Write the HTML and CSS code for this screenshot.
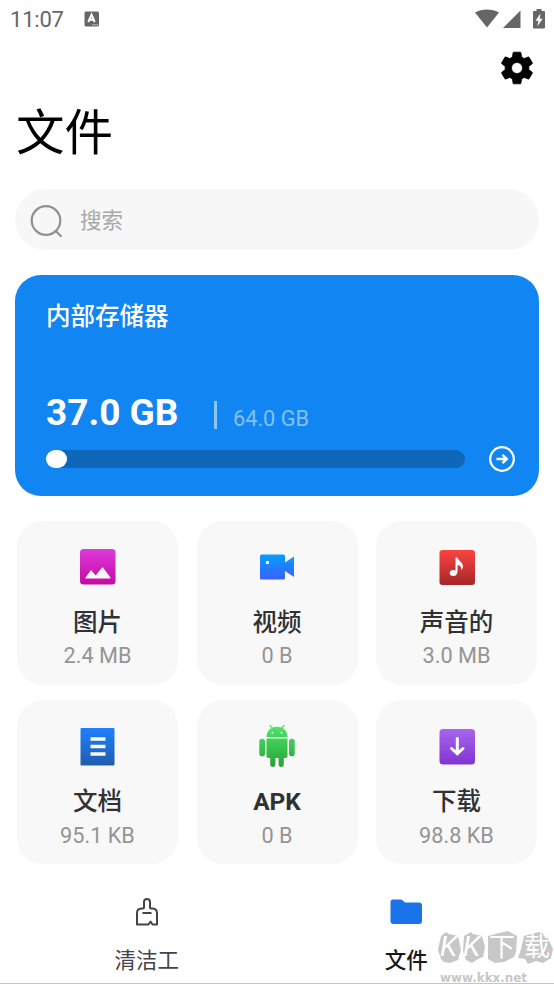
FILE: index.html
```html
<!DOCTYPE html>
<html lang="zh-CN">
<head>
<meta charset="utf-8">
<title>文件</title>
<link rel="stylesheet" href="styles.css">
</head>
<body>
<div class="screen">
  <header class="status">
    <span class="clock">11:07</span>
    <svg class="ime" width="16" height="16" viewBox="0 0 16 16"><rect x=".5" y=".5" width="14.5" height="15" rx="1.5" fill="#666"/><path d="M4.300 11 7.500 3.700 10.700 11M5.700 8.700h3.600" fill="none" stroke="#fff" stroke-width="2"/><path d="M8 13.800h6" stroke="#ddd" stroke-width="1" stroke-dasharray="1.500 .7"/></svg>
    <span class="signals">
      <svg width="24" height="20" viewBox="0 0 24 20"><path d="M0 3.500C6.500-.6 17.500-.6 24 3.500L12 18.500Z" fill="#666"/></svg>
      <svg width="18" height="20" viewBox="0 0 18 20"><path d="M0 19 17.500 1.500V19Z" fill="#666"/></svg>
      <svg class="battery" width="12" height="20" viewBox="0 0 12 20"><path d="M3.500 0h5v2H11q1 0 1 1v15.500q0 1-1 1H1q-1 0-1-1V3q0-1 1-1h2.500Z" fill="#666"/><path d="M7.500 4.500 2.500 11.700H5.500L4.300 17.300 9.700 9.800H6.700Z" fill="#fff"/></svg>
    </span>
  </header>
  <div class="toolbar">
    <svg width="38" height="38" viewBox="0 0 24 24"><path d="M19.430 12.980c.040-.320.070-.640.070-.980s-.030-.660-.070-.980l2.110-1.650c.190-.150.240-.420.120-.640l-2-3.460c-.120-.220-.390-.300-.610-.220l-2.490 1c-.520-.400-1.080-.730-1.690-.980l-.380-2.650A.488.488 0 0 0 14 2h-4c-.250 0-.460.180-.490.420l-.380 2.650c-.610.250-1.170.590-1.690.980l-2.490-1c-.230-.090-.490 0-.610.220l-2 3.460c-.130.220-.070.490.120.640l2.110 1.650c-.040.320-.070.650-.070.980s.030.660.070.980l-2.110 1.650c-.190.150-.240.420-.120.640l2 3.460c.120.220.390.300.610.220l2.490-1c.520.400 1.080.730 1.690.980l.380 2.650c.030.240.240.420.490.420h4c.250 0 .460-.180.490-.420l.380-2.650c.610-.250 1.170-.590 1.690-.980l2.490 1c.230.090.490 0 .610-.220l2-3.460c.120-.220.070-.490-.120-.640l-2.110-1.650zM12 15.500c-1.930 0-3.500-1.570-3.500-3.500s1.570-3.500 3.500-3.500 3.500 1.570 3.500 3.500-1.570 3.500-3.500 3.500z" stroke="#000" stroke-width=".5"/></svg>
  </div>
  <h1>文件</h1>
  <div class="search">
    <svg width="34" height="34" viewBox="0 0 34 34" fill="none" stroke="#919191" stroke-width="2.200"><circle cx="16" cy="15.500" r="14.300"/><path d="m25.500 25.700 6 6"/></svg>
    <span>搜索</span>
  </div>
  <section class="storage">
    <h2>内部存储器</h2>
    <div class="amount"><b>37.0 GB</b><i></i><span>64.0 GB</span></div>
    <div class="usage">
      <div class="track"><div class="fill"></div></div>
      <svg width="26" height="26" viewBox="0 0 26 26" fill="none" stroke="#fff" stroke-width="2.200"><circle cx="13" cy="13" r="11.800"/><path d="M7.500 13H18M13.500 8.800 17.700 13l-4.200 4.200" stroke-width="2.500"/></svg>
    </div>
  </section>
  <main class="grid">
    <div class="tile">
      <svg class="icon" width="44" height="48" viewBox="0 0 44 48"><defs><linearGradient id="g1" x2="0" y2="1"><stop stop-color="#dc3bdc"/><stop offset="1" stop-color="#c40aa0"/></linearGradient></defs><rect x="4" y="6" width="35.500" height="35.500" rx="3.500" fill="url(#g1)"/><path d="M9.500 35.500v-1L15 27l4.700 5.500L26.500 24l8 10.500v1Z" fill="#f8f8f8"/></svg>
      <h3>图片</h3><p>2.4 MB</p>
    </div>
    <div class="tile">
      <svg class="icon" width="44" height="48" viewBox="0 0 44 48"><defs><linearGradient id="g2" x1="0" y1="11" x2="0" y2="36" gradientUnits="userSpaceOnUse"><stop stop-color="#03a0ff"/><stop offset="1" stop-color="#3d60ff"/></linearGradient></defs><path d="M6.500 11.500h22q1.500 0 1.500 1.500v6.500l9-6v20.500l-9-6V35q0 1.500-1.500 1.500H6.500q-1.500 0-1.500-1.500V13q0-1.500 1.500-1.500Z" fill="url(#g2)"/><rect x="11" y="18" width="3" height="3" fill="#fff"/></svg>
      <h3>视频</h3><p>0 B</p>
    </div>
    <div class="tile">
      <svg class="icon" width="44" height="48" viewBox="0 0 44 48"><defs><linearGradient id="g3" x2="0" y2="1"><stop stop-color="#fb4441"/><stop offset="1" stop-color="#a52727"/></linearGradient></defs><rect x="4.500" y="7" width="35.500" height="35" rx="3" fill="url(#g3)"/><ellipse cx="18.300" cy="30" rx="3.600" ry="2.900" fill="#fff"/><path d="M20.500 30V14.500h2C23.500 18.500 28 18.500 28 24L26.500 27.500C26.500 24 25.500 22.500 22.500 22V30Z" fill="#fff"/></svg>
      <h3>声音的</h3><p>3.0 MB</p>
    </div>
    <div class="tile">
      <svg class="icon" width="44" height="48" viewBox="0 0 44 48"><defs><linearGradient id="g4" x2="0" y2="1"><stop stop-color="#1e80fc"/><stop offset="1" stop-color="#205dac"/></linearGradient></defs><rect x="4.500" y="6" width="34" height="37.500" rx="1" fill="url(#g4)"/><path d="M14.500 17h15M14.500 24.500h15M14.500 32h15" stroke="#f8f8f8" stroke-width="3.500"/></svg>
      <h3>文档</h3><p>95.1 KB</p>
    </div>
    <div class="tile">
      <svg class="icon" width="44" height="48" viewBox="0 0 44 48"><defs><linearGradient id="g5" x1="0" y1="3" x2="0" y2="45" gradientUnits="userSpaceOnUse"><stop stop-color="#4ce967"/><stop offset="1" stop-color="#29a23a"/></linearGradient></defs><path d="M11.500 15C11.500 10.500 13.500 8 16.500 6L14 3.500l1-.8 3 2.700q4-1.500 8 0l3-2.700 1 .8L27.500 6c3 2 5 4.500 5 9ZM11.500 16.500h21V34q0 2-2 2h-1.700v6q0 3-2.600 3t-2.600-3v-6h-3.200v6q0 3-2.600 3t-2.600-3v-6h-1.700q-2 0-2-2ZM4.300 19.500a2.850 2.850 0 0 1 5.700 0v12a2.850 2.850 0 0 1-5.700 0ZM34 19.500a2.850 2.850 0 0 1 5.700 0v12a2.850 2.850 0 0 1-5.700 0Z" fill="url(#g5)"/><circle cx="17.500" cy="10.700" r=".9" fill="#f8f8f8"/><circle cx="26.500" cy="10.700" r=".9" fill="#f8f8f8"/></svg>
      <h3 class="latin">APK</h3><p>0 B</p>
    </div>
    <div class="tile">
      <svg class="icon" width="44" height="48" viewBox="0 0 44 48"><defs><linearGradient id="g6" x2="0" y2="1"><stop stop-color="#a865f0"/><stop offset="1" stop-color="#8134cf"/></linearGradient></defs><rect x="4.500" y="7" width="35.500" height="35.500" rx="3.500" fill="url(#g6)"/><path d="M22.300 16.500V31M16.600 26.500l5.700 5.200 5.700-5.200" fill="none" stroke="#fff" stroke-width="3" stroke-linecap="round"/></svg>
      <h3>下载</h3><p>98.8 KB</p>
    </div>
  </main>
  <nav>
    <div class="tab">
      <svg width="34" height="34" viewBox="0 0 34 34" fill="none" stroke="#43434b" stroke-width="2"><path d="M14 11.500V6a3 3 0 0 1 6 0v5.500q0 1 1 1h1.500Q27 12.800 27 17v11.500h-4.500l-2-3-2 3H7V17q0-4.200 4.500-4.500H13q1 0 1-1ZM12.500 17h9" stroke-linejoin="round"/></svg>
      <span>清洁工</span>
    </div>
    <div class="tab active">
      <svg width="34" height="34" viewBox="0 0 34 34"><path d="M4 3.500h8.500l3.500 3h14q3 0 3 3V25q0 3-3 3H4.500q-3 0-3-3V6q0-2.500 2.500-2.500Z" fill="#1a73e8"/></svg>
      <span>文件</span>
    </div>
  </nav>
  <div class="watermark">
    <svg width="118" height="54" viewBox="0 0 118 54">
      <path d="m5 6 5-4 3 2 9 2 3 14-3 10-8 3-6-1-3-3-3-9Z M28 6l7-4 2 2 9 2 3 11-2 10-5 2-6 4-6-3-3-9Z M52 6l11-3 9-2 9 5-1 16-2 5-10 5-9 1-7-4Z M88 6l15-4 8 4 6 13-2 9-8 5-7-2-8 3-3-5-7-1 3-9Z" fill="#c7c7c7"/>
      <g fill="#fff"><text class="wm-k" x="4" y="26">K</text><text class="wm-k" x="27" y="26">K</text><text class="wm-cjk" x="53" y="26">下</text><text class="wm-cjk" x="88" y="26">载</text></g>
      <text class="wm-url" x="4" y="51.500" textLength="87" lengthAdjust="spacingAndGlyphs">www.kkx.net</text>
    </svg>
  </div>
</div>
</body>
</html>
```
FILE: styles.css
```css
* { box-sizing: border-box; }
body, h1, h2, h3, p { margin: 0; }
body { background: #fff; font-family: Roboto, "Noto Sans CJK SC", sans-serif; overflow: hidden; }
.screen { position: relative; height: 984px; display: flex; flex-direction: column; border-bottom: 1px solid #c5c5c5; }
.status { height: 40px; padding: 0 9px 3px 10px; display: flex; align-items: center; color: #666; }
.clock { width: 74px; font-size: 22px; line-height: 36px; letter-spacing: -.2px; padding-top: 2px; }
.signals { margin-left: auto; display: flex; align-items: center; gap: 4px; }
.battery { margin-left: 8px; }
.toolbar { height: 56px; padding: 9px 18px 0; display: flex; justify-content: flex-end; }
h1 { height: 93px; padding: 2px 0 0 16px; font-size: 48.5px; line-height: 72px; font-weight: 400; color: #000; }
.search { flex: none; height: 61px; margin: 0 15px; padding-left: 15px; border-radius: 31px; background: #f7f7f7; display: flex; align-items: center; gap: 16px; color: #a8a8a8; font-size: 21.5px; font-weight: 400; }
.search svg { margin-top: 4px; }
.search span { margin-top: -2px; }
.storage { flex: none; height: 221px; margin: 25px 15px 0; padding: 24px 24px 0 31px; border-radius: 26px; background: #1186f2; color: #fff; }
h2 { height: 88px; font-size: 24.5px; line-height: 36px; font-weight: 500; }
.amount { height: 50px; display: flex; align-items: center; }
.amount b { width: 168px; padding-top: 2px; font-size: 37px; line-height: 50px; letter-spacing: 0; }
.amount i { width: 3px; height: 28px; background: #8bc4fa; margin-top: 6px; }
.amount span { margin: 12px 0 0 16px; font-size: 21.7px; color: #83c0fa; }
.usage { display: flex; align-items: center; justify-content: space-between; margin-top: 9px; }
.track { width: 419px; height: 17.5px; border-radius: 9px; background: #0e67b9; }
.fill { width: 21px; height: 17.5px; border-radius: 9px; background: #fff; }
.grid { display: grid; grid-template-columns: repeat(3, 161px); grid-auto-rows: 164px; gap: 15.5px 18.5px; margin: 24.5px 0 0 17px; }
.tile { border-radius: 26px; background: #f8f8f8; padding-top: 22px; display: flex; flex-direction: column; align-items: center; }
h3 { margin-top: 14px; font-size: 24.5px; line-height: 36px; font-weight: 500; color: #303133; }
h3.latin { font-weight: 700; letter-spacing: -.1px; }
.tile p { margin-top: 1.5px; font-size: 21.7px; line-height: 28px; color: #949494; }
nav { display: flex; padding: 32px 18px 0 17px; }
.tab { flex: 1; display: flex; flex-direction: column; align-items: center; color: #43434b; font-size: 21.5px; line-height: 32px; }
.tab span { margin-top: 15px; font-weight: 400; }
.tab.active span { color: #18181c; font-weight: 500; }
.watermark { position: absolute; left: 436px; top: 930px; height: 53px; }
.watermark svg { display: block; overflow: visible; }
.wm-k { font: italic 400 28px Roboto, sans-serif; }
.wm-cjk { font: 400 26px "Noto Sans CJK SC", sans-serif; }
.wm-url { font: 700 11.5px "DejaVu Sans", sans-serif; fill: #c7c7c7; }
```
